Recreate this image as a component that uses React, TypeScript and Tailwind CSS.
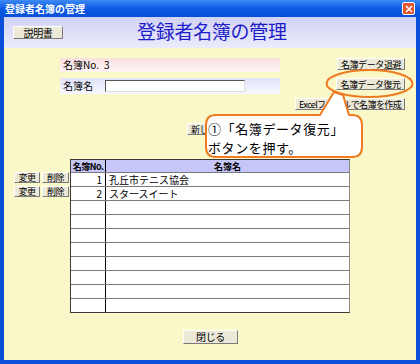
import React from 'react'

const jp = { fontFamily: '"Noto Sans CJK JP", "Noto Sans", sans-serif' }

const Btn = ({ label, className = '' }: { label: React.ReactNode; className?: string }) => (
  <div
    className={`flex items-center justify-center overflow-hidden whitespace-nowrap border border-t-white border-l-white border-b-[#7a7a7a] border-r-[#7a7a7a] bg-[#ece9d8] text-[9px] leading-none tracking-[-0.4px] text-black ${className}`}
  >
    {label}
  </div>
)

const rows = [
  { no: '1', name: '孔丘市テニス協会' },
  { no: '2', name: 'スタースイート' },
  ...Array.from({ length: 8 }, () => ({ no: '', name: '' })),
]

export default function App() {
  return (
    <div className="relative h-[364px] w-[420px] overflow-hidden bg-[#0a4fd8]" style={jp}>
      {/* title bar */}
      <div className="flex h-[17px] items-center justify-between bg-linear-to-b from-[#3d8af6] via-[#0b5be2] to-[#0550d6] pl-[5px] pr-[5px]">
        <span className="text-[10px] font-bold leading-none text-white">登録者名簿の管理</span>
        <div className="flex h-[13px] w-[13px] items-center justify-center rounded-[2px] border border-white bg-[#e0542e]">
          <svg width="8" height="8" viewBox="0 0 8 8">
            <path d="M1 1 L7 7 M7 1 L1 7" stroke="white" strokeWidth="1.6" />
          </svg>
        </div>
      </div>

      {/* window body */}
      <div className="mx-[4px] flex h-[343px] flex-col bg-[#faf7c8]">
        {/* header band */}
        <div className="relative flex h-[31px] items-center bg-linear-to-b from-[#d2d2f5] to-[#ececfc]">
          <Btn label="説明書" className="ml-[9px] h-[13px] w-[50px] text-[10px]" />
          <span className="absolute left-[133px] top-[4px] text-[19px] leading-none tracking-[-0.3px] text-[#1d1dc8]">
            登録者名簿の管理
          </span>
        </div>

        {/* top section */}
        <div className="mt-[10px] flex">
          <div className="ml-[56px] flex w-[220px] flex-col gap-[6px]">
            <div className="flex h-[14px] items-center bg-linear-to-b from-[#fbe0e0] to-[#fff4f4] pl-[3px] text-[10px] leading-none">
              <span>名簿No.</span>
              <span className="ml-[5px]">3</span>
            </div>
            <div className="flex h-[16px] items-center bg-linear-to-b from-[#e2e2fa] to-[#f8f8ff] pl-[3px] text-[10px] leading-none">
              <span className="w-[42px]">名簿名</span>
              <div className="h-[12px] w-[140px] border border-t-[#555] border-l-[#555] border-b-[#ddd] border-r-[#ddd] bg-white" />
            </div>
          </div>
          <div className="ml-auto mr-[11px] flex flex-col items-end gap-[8px]">
            <Btn label="名簿データ退避" className="h-[12px] w-[68px]" />
            <Btn label="名簿データ復元" className="h-[12px] w-[69px]" />
            <Btn label="Excelファイルで名簿を作成" className="h-[12px] w-[110px] tracking-[-0.6px]" />
          </div>
        </div>

        {/* new button row (mostly hidden by the callout) */}
        <div className="mt-[13px] flex">
          <Btn label="新し" className="ml-[183px] h-[12px] w-[60px] justify-start pl-[3px]" />
        </div>

        {/* table section */}
        <div className="mt-[24px] flex">
          <div className="ml-[10px] mt-[13px] flex w-[56px] flex-col gap-[3px]">
            {[0, 1].map((i) => (
              <div key={i} className="flex h-[11px] gap-[2px]">
                <Btn label="変更" className="h-[11px] w-[26px]" />
                <Btn label="削除" className="h-[11px] w-[27px]" />
              </div>
            ))}
          </div>
          <div className="w-[280px] border border-[#3a3a3a] border-r-[#8a8a8a] bg-white text-[10px] leading-none">
            <div className="flex h-[12px] bg-[#c6c6f8] text-[9px] font-bold">
              <div className="flex w-[35px] items-center justify-center whitespace-nowrap border-r border-black tracking-[-0.5px]">名簿No.</div>
              <div className="flex flex-1 items-center justify-center">名簿名</div>
            </div>
            {rows.map((r, i) => (
              <div key={i} className="flex h-[14px] border-t border-[#7a7a7a]">
                <div className="flex w-[35px] items-center justify-end border-r border-black pr-[3px]">{r.no}</div>
                <div className="flex flex-1 items-center pl-[3px]">{r.name}</div>
              </div>
            ))}
          </div>
        </div>

        {/* close */}
        <div className="mt-[17px] flex justify-center">
          <Btn label="閉じる" className="ml-[1px] h-[14px] w-[55px] text-[10px]" />
        </div>
      </div>

      {/* callout overlay */}
      <svg className="pointer-events-none absolute left-0 top-0" width="420" height="364" viewBox="0 0 420 364">
        <path
          d="M216 115 L320 115 L334 92 L343 95 L349 115 L352 115 Q362 115 362 125 L362 147 Q362 157 352 157 L216 157 Q206 157 206 147 L206 125 Q206 115 216 115 Z"
          fill="white"
          stroke="#ee7a22"
          strokeWidth="2"
          strokeLinejoin="round"
        />
        <ellipse cx="369.5" cy="83.5" rx="43" ry="13.5" fill="none" stroke="#ee7a22" strokeWidth="2" />
      </svg>
      <div className="pointer-events-none absolute left-[208px] top-[119px] flex flex-col whitespace-nowrap text-[13px] leading-[19px] tracking-[0.6px] text-black">
        <span>①「名簿データ復元」</span>
        <span>ボタンを押す。</span>
      </div>
    </div>
  )
}
